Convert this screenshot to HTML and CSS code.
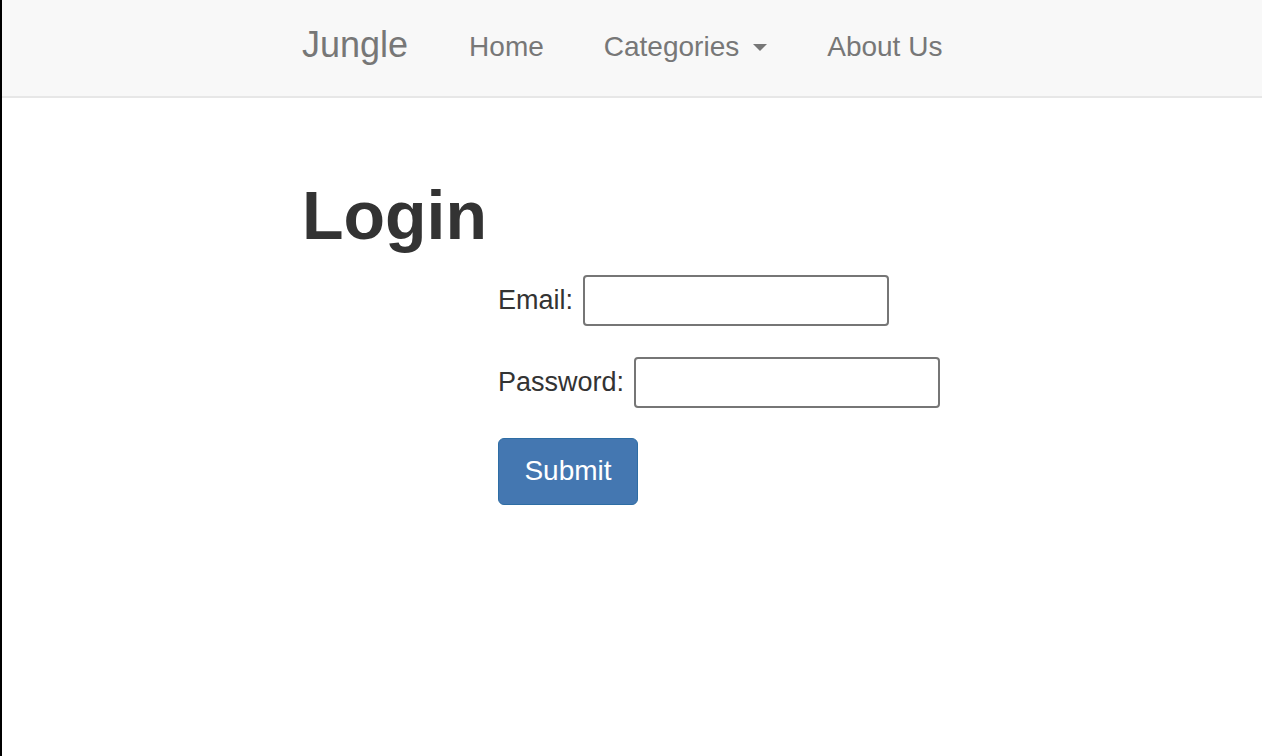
FILE: index.html
```html
<!DOCTYPE html>
<html lang="en">

<head>
    <meta charset="UTF-8">
    <meta name="viewport" content="width=device-width, initial-scale=1.0">
    <title>Jungle</title>
    <link rel="stylesheet" href="styles.css">
</head>

<body>
    <nav class="navbar">
        <div class="container nav-inner">
            <a class="brand" href="#">Jungle</a>
            <ul class="nav-list">
                <li><a href="#">Home</a></li>
                <li><a href="#">Categories <span class="caret"></span></a></li>
                <li><a href="#">About Us</a></li>
            </ul>
        </div>
    </nav>

    <main class="container">
        <h1 class="title">Login</h1>
        <form class="login-form">
            <div class="row">
                <label for="email">Email:</label>
                <input type="email" id="email">
            </div>
            <div class="row">
                <label for="password">Password:</label>
                <input type="password" id="password">
            </div>
            <button type="submit" class="btn">Submit</button>
        </form>
    </main>
</body>

</html>
```

FILE: styles.css
```css
* {
    margin: 0;
    padding: 0;
    box-sizing: border-box;
}

body {
    font-family: "Liberation Sans", Arial, sans-serif;
    color: #333;
    background: #fff;
    border-left: 2px solid #000;
    min-height: 756px;
}

a {
    text-decoration: none;
}

.container {
    width: 660px;
    margin: 0 auto;
}

.navbar {
    background-color: #f8f8f8;
    border-bottom: 2px solid #e7e7e7;
    height: 98px;
}

.nav-inner {
    display: flex;
    align-items: center;
    height: 96px;
    white-space: nowrap;
}

.brand {
    font-size: 36px;
    color: #777;
    padding-right: 31px;
    margin-bottom: 7px;
}

.nav-list {
    display: flex;
    align-items: center;
    list-style: none;
    flex-shrink: 0;
}

.nav-list a {
    display: flex;
    align-items: center;
    font-size: 28px;
    color: #777;
    padding: 0 30px;
    margin-bottom: 3px;
}

.caret {
    display: inline-block;
    width: 0;
    height: 0;
    margin-left: 14px;
    margin-top: 2px;
    border-top: 7px solid #777;
    border-left: 7.5px solid transparent;
    border-right: 7.5px solid transparent;
}

.title {
    font-size: 68px;
    font-weight: bold;
    line-height: 1.1;
    margin-top: 80px;
}

.login-form {
    margin-left: 196px;
    margin-top: 22px;
}

.row {
    display: flex;
    align-items: center;
    margin-bottom: 31px;
}

.row label {
    font-size: 27px;
    color: #333;
    margin-right: 10px;
}

.row input {
    width: 306px;
    height: 51px;
    border: 2px solid #767676;
    border-radius: 4px;
    background: #fff;
    font-size: 20px;
    padding: 0 8px;
}

.btn {
    width: 140px;
    height: 67px;
    font-family: "Liberation Sans", Arial, sans-serif;
    font-size: 28px;
    color: #fff;
    background-color: #4477b1;
    border: 1px solid #2e6da4;
    border-radius: 6px;
    margin-top: -1px;
}
```
